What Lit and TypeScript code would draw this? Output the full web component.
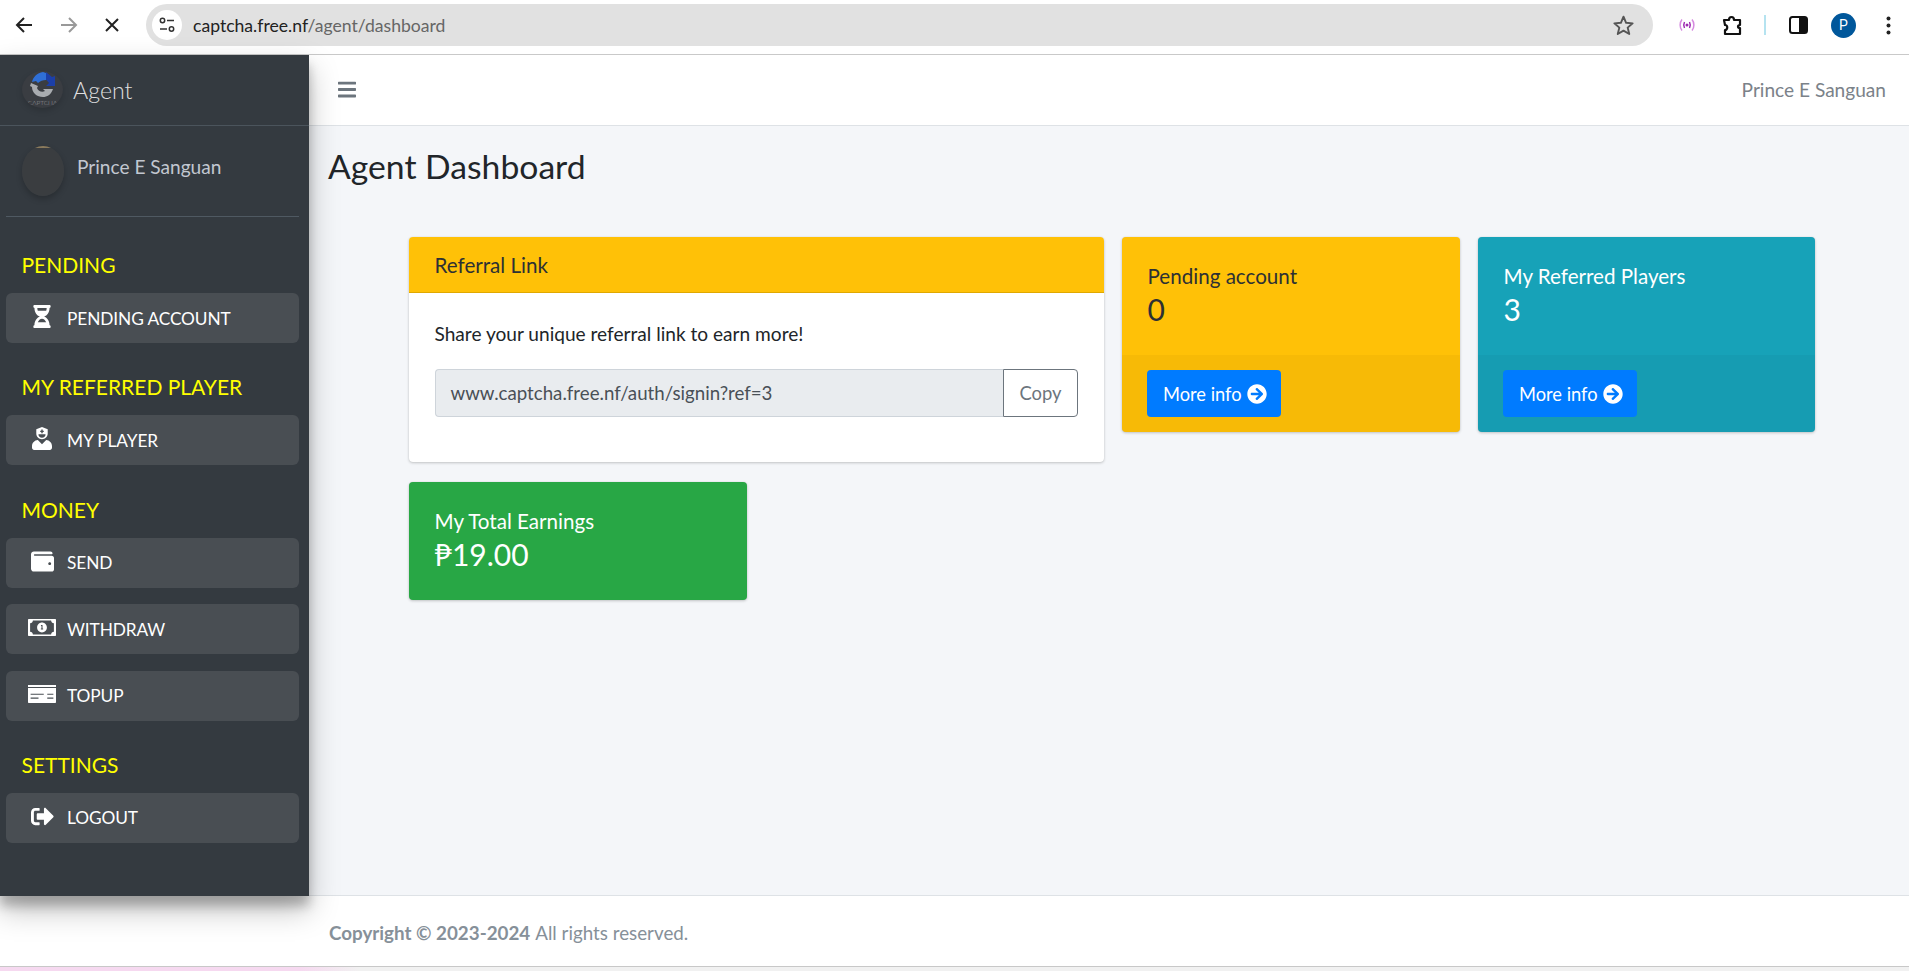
import { css, html, LitElement, svg } from "lit";
import { customElement } from "lit/decorators.js";

const hourglass = svg`<path d="M360 0H24C10.745 0 0 10.745 0 24v16c0 13.255 10.745 24 24 24 0 90.965 51.016 167.734 120.842 192C75.016 280.266 24 357.035 24 448c-13.255 0-24 10.745-24 24v16c0 13.255 10.745 24 24 24h336c13.255 0 24-10.745 24-24v-16c0-13.255-10.745-24-24-24 0-90.965-51.016-167.734-120.842-192C308.984 231.734 360 154.965 360 64c13.255 0 24-10.745 24-24V24c0-13.255-10.745-24-24-24zm-75.078 384H99.08c17.059-46.797 52.096-80 92.92-80 40.821 0 75.862 33.196 92.922 80zm.019-256H99.078C91.988 108.548 88 86.748 88 64h208c0 22.805-3.987 44.587-11.059 64z"/>`;
const nurse = svg`<path d="M224 0 96 48v96c0 70.700 57.300 128 128 128s128-57.300 128-128V48L224 0zm-16 56h32v24h24v32h-24v24h-32v-24h-24V80h24V56zM144 160h160v0c0 44.200-35.800 80-80 80s-80-35.800-80-80zM318 289l-94 94-94-94C58 295 0 354 0 426v38c0 26.500 21.500 48 48 48h352c26.500 0 48-21.500 48-48v-38c0-72-58-131-130-137z" fill-rule="evenodd"/>`;
const wallet = svg`<path d="M461 128H80c-9 0-16-7-16-16s7-16 16-16h384c9 0 16-7 16-16 0-27-21-48-48-48H64C29 32 0 61 0 96v320c0 35 29 64 64 64h397c28 0 51-22 51-48V176c0-26-23-48-51-48zm-45 208c-18 0-32-14-32-32s14-32 32-32 32 14 32 32-14 32-32 32z"/>`;
const bill = svg`<path fill-rule="evenodd" d="M16 64h608c9 0 16 7 16 16v352c0 9-7 16-16 16H16c-9 0-16-7-16-16V80c0-9 7-16 16-16zm32 96v192c35 0 64 29 64 64h416c0-35 29-64 64-64V160c-35 0-64-29-64-64H112c0 35-29 64-64 64zm272-16c62 0 112 50 112 112s-50 112-112 112-112-50-112-112 50-112 112-112zm-24 56v24h12v56h-14v24h52v-24h-14v-80h-36z"/>`;
const card = svg`<path fill-rule="evenodd" d="M0 60h640v44H0zM0 128h640v324c0 9-7 16-16 16H16c-9 0-16-7-16-16V128zm60 130v24h300v-24H60zm380 0v24h140v-24H440zM60 346v24h180v-24H60zm380 0v24h140v-24H440z"/>`;
const signOut = svg`<path d="M497 273L329 441c-15 15-41 4.500-41-17v-96H152c-13.300 0-24-10.700-24-24v-96c0-13.300 10.700-24 24-24h136V88c0-21.400 25.900-32 41-17l168 168c9.300 9.400 9.300 24.600 0 34zM192 436v-40c0-6.600-5.400-12-12-12H96c-17.700 0-32-14.300-32-32V160c0-17.700 14.300-32 32-32h84c6.600 0 12-5.400 12-12V76c0-6.600-5.400-12-12-12H96c-53 0-96 43-96 96v192c0 53 43 96 96 96h84c6.600 0 12-5.400 12-12z"/>`;
const arrowCircle = svg`<path d="M256 8c137 0 248 111 248 248S393 504 256 504 8 393 8 256 119 8 256 8zm-28.900 143.600l75.500 72.400H120c-13.300 0-24 10.700-24 24v16c0 13.300 10.700 24 24 24h182.600l-75.500 72.400c-9.700 9.300-9.900 24.800-.4 34.300l11 10.900c9.400 9.400 24.600 9.400 33.900 0L404.300 273c9.400-9.400 9.400-24.600 0-33.900L271.600 106.300c-9.400-9.400-24.600-9.400-33.900 0l-11 11c-9.400 9.500-9.200 25 .4 34.300z"/>`;
const bars = svg`<path d="M16 132h416c8.837 0 16-7.163 16-16V76c0-8.837-7.163-16-16-16H16C7.163 60 0 67.163 0 76v40c0 8.837 7.163 16 16 16zm0 160h416c8.837 0 16-7.163 16-16v-40c0-8.837-7.163-16-16-16H16c-8.837 0-16 7.163-16 16v40c0 8.837 7.163 16 16 16zm0 160h416c8.837 0 16-7.163 16-16v-40c0-8.837-7.163-16-16-16H16c-8.837 0-16 7.163-16 16v40c0 8.837 7.163 16 16 16z"/>`;

type NavItem = { label: string; icon: unknown; box: string; w: number; h: number };
type NavGroup = { title: string; items: NavItem[] };

const groups: NavGroup[] = [
  { title: "PENDING", items: [{ label: "PENDING ACCOUNT", icon: hourglass, box: "0 0 384 512", w: 18, h: 23 }] },
  { title: "MY REFERRED PLAYER", items: [{ label: "MY PLAYER", icon: nurse, box: "0 0 448 512", w: 20, h: 23 }] },
  {
    title: "MONEY",
    items: [
      { label: "SEND", icon: wallet, box: "0 0 512 512", w: 23, h: 23 },
      { label: "WITHDRAW", icon: bill, box: "0 64 640 384", w: 28, h: 17 },
      { label: "TOPUP", icon: card, box: "0 60 640 408", w: 28, h: 20 },
    ],
  },
  { title: "SETTINGS", items: [{ label: "LOGOUT", icon: signOut, box: "0 0 512 512", w: 23, h: 23 }] },
];

@customElement("app-root")
export class AppRoot extends LitElement {
  static styles = css`
    * {
      box-sizing: border-box;
    }

    :host {
      display: flex;
      flex-direction: column;
      height: 971px;
      overflow: hidden;
      background: #fff;
      color: #212529;
      font-family: "Lato", "Liberation Sans", sans-serif;
      font-size: 18px;
    }

    /* browser chrome */
    .chrome {
      height: 55px;
      flex: none;
      display: flex;
      align-items: center;
      background: #fff;
      border-bottom: 1px solid #c9c9c9;
      padding: 0 0 4px 15px;
    }
    .chrome svg {
      display: block;
      flex: none;
    }
    .nav-btns {
      display: flex;
      gap: 27px;
      align-items: center;
      width: 131px;
    }
    .omnibox {
      width: 1507px;
      height: 42px;
      border-radius: 21px;
      background: #e1e1e1;
      display: flex;
      align-items: center;
      padding: 0 19px 0 6px;
      font-size: 17.6px;
      color: #666;
    }
    .site-icon {
      width: 30px;
      height: 30px;
      border-radius: 50%;
      background: #fff;
      display: flex;
      align-items: center;
      justify-content: center;
      margin-right: 11px;
    }
    .url b {
      font-weight: 400;
      color: #222;
    }
    .star {
      margin-left: auto;
    }
    .tools {
      display: flex;
      align-items: center;
    }
    .profile {
      width: 25px;
      height: 25px;
      border-radius: 50%;
      background: #00579b;
      color: #fff;
      font-size: 14px;
      display: flex;
      align-items: center;
      justify-content: center;
      font-family: "Roboto", sans-serif;
    }
    .sep {
      width: 2px;
      height: 20px;
      background: #b5e3f0;
    }

    /* page */
    .page {
      flex: 1;
      display: flex;
      min-height: 0;
    }
    .sidebar {
      width: 309px;
      height: 841px;
      flex: none;
      background: #343a40;
      box-shadow: 0 14px 28px rgba(0, 0, 0, 0.25), 0 10px 10px rgba(0, 0, 0, 0.22);
      position: relative;
      z-index: 2;
      padding-top: 1px;
    }
    .brand {
      height: 70px;
      display: flex;
      align-items: center;
      padding: 0 0 2px 22px;
      border-bottom: 1px solid #4b545c;
      color: rgba(255, 255, 255, 0.85);
      font-size: 23.2px;
      font-weight: 300;
    }
    .logo {
      width: 41px;
      height: 37px;
      border-radius: 50%;
      margin-right: 10px;
      display: block;
      background: #3a3d42;
      box-shadow: 0 3px 6px rgba(0, 0, 0, 0.16);
    }
    .user {
      height: 91px;
      margin: 0 10px 0 6px;
      padding-left: 16px;
      display: flex;
      align-items: flex-start;
      border-bottom: 1px solid #4f5962;
      color: #c2c7d0;
    }
    .avatar {
      width: 42px;
      height: 50px;
      margin-top: 20px;
      border-radius: 50%;
      background: linear-gradient(#8a7a5c 0 2px, #3a3d40 2px);
      box-shadow: 0 3px 6px rgba(0, 0, 0, 0.23);
    }
    .user-name {
      margin: 27px 0 0 13px;
      font-size: 19.1px;
      line-height: 28px;
    }
    .group-title {
      margin: 0 0 14px 21.5px;
      height: 28px;
      line-height: 28px;
      font-size: 21px;
      color: #ffff00;
    }
    .groups {
      padding-top: 34px;
    }
    .group {
      margin-bottom: 30.3px;
    }
    .items {
      display: flex;
      flex-direction: column;
      gap: 16.5px;
    }
    .item {
      height: 50px;
      margin: 0 10px 0 6px;
      background: #494e53;
      border-radius: 6px;
      color: #fff;
      font-size: 17.3px;
      letter-spacing: -0.1px;
      display: flex;
      align-items: center;
    }
    .item-icon {
      width: 61px;
      padding-left: 11px;
      display: flex;
      justify-content: center;
      align-items: center;
      flex: none;
      margin-top: -3px;
    }
    .item-icon svg {
      display: block;
      fill: #fff;
    }

    .main {
      flex: 1;
      min-width: 0;
      display: flex;
      flex-direction: column;
    }
    .navbar {
      height: 71px;
      flex: none;
      background: #fff;
      border-bottom: 1px solid #dee2e6;
      display: flex;
      align-items: center;
      justify-content: space-between;
      padding: 0 23px 2px 29px;
      color: #7b8289;
      font-size: 19.1px;
    }
    .navbar svg {
      display: block;
      fill: #6c757d;
    }
    .content {
      flex: 1;
      background: #f4f6f9;
      padding: 20px 94px 0 19px;
    }
    h1 {
      margin: 0 0 51px;
      font-size: 33.7px;
      line-height: 40px;
      font-weight: 400;
      color: #212529;
    }
    .grid {
      margin-left: 81px;
      display: grid;
      grid-template-columns: 338px 338px 337.5px 337px;
      column-gap: 18.5px;
      row-gap: 20px;
      align-items: start;
    }
    .card {
      border-radius: 4px;
      box-shadow: 0 0 1px rgba(0, 0, 0, 0.13), 0 1px 3px rgba(0, 0, 0, 0.2);
      overflow: hidden;
    }
    .referral {
      grid-column: span 2;
      height: 225px;
      background: #fff;
    }
    .referral-head {
      height: 56px;
      background: #ffc107;
      border-bottom: 1px solid #e0a800;
      padding: 0 25.5px;
      display: flex;
      align-items: center;
      font-size: 20.6px;
      color: #2d3034;
    }
    .referral-body {
      padding: 27px 25.5px;
      font-size: 19.1px;
    }
    .referral-body p {
      margin: 0 0 21px;
      line-height: 28px;
    }
    .field {
      display: flex;
      height: 48px;
    }
    .field-value {
      flex: 1;
      background: #e9ecef;
      border: 1px solid #ced4da;
      border-right: 0;
      border-radius: 4px 0 0 4px;
      padding-left: 15px;
      display: flex;
      align-items: center;
      color: #495057;
      font-size: 18.7px;
    }
    .copy {
      width: 75px;
      border: 1px solid #6c757d;
      border-radius: 0 4px 4px 0;
      background: #fff;
      display: flex;
      align-items: center;
      justify-content: center;
      color: #6c757d;
      font-size: 18.4px;
    }
    .stat-top {
      height: 118px;
      padding: 25px 25.5px 0;
    }
    .stat-label {
      font-size: 20.6px;
      line-height: 28px;
    }
    .stat-value {
      font-size: 30px;
      line-height: 39px;
    }
    .stat-foot {
      height: 77px;
      padding: 15px 25px;
      background: rgba(0, 0, 0, 0.03);
    }
    .more {
      display: inline-flex;
      align-items: center;
      height: 47px;
      width: 134px;
      padding-left: 16px;
      gap: 5px;
      border-radius: 4px;
      background: #007bff;
      color: #fff;
      font-size: 18.3px;
    }
    .more svg {
      display: block;
      fill: #fff;
    }
    .yellow {
      background: #ffc107;
      color: #2d3034;
    }
    .teal {
      background: #17a2b8;
      color: #fff;
    }
    .green {
      background: #28a745;
      color: #fff;
      height: 118px;
      padding: 25px 25.5px 0;
    }
    .footer {
      height: 71px;
      flex: none;
      background: #fff;
      border-top: 1px solid #dee2e6;
      padding: 2px 0 0 20px;
      display: flex;
      align-items: center;
      gap: 5px;
      color: #869099;
      font-size: 18.8px;
    }
    .bottom-strip {
      height: 5px;
      flex: none;
      border-top: 1px solid #c8c8c8;
      background: linear-gradient(90deg, #f6d9f0 0, #f6d9f0 300px, #f1f1f1 360px);
    }
  `;

  private _renderChrome() {
    return html`
      <div class="chrome">
        <div class="nav-btns">
          <svg width="18" height="18" viewBox="0 0 18 18" fill="none" stroke="#222" stroke-width="2"><path d="M17 9H2M9 2 2 9l7 7" /></svg>
          <svg width="18" height="18" viewBox="0 0 18 18" fill="none" stroke="#999" stroke-width="2"><path d="M1 9h15M9 2l7 7-7 7" /></svg>
          <svg width="14" height="14" viewBox="0 0 14 14" fill="none" stroke="#222" stroke-width="2"><path d="M1 1l12 12M13 1 1 13" /></svg>
        </div>
        <div class="omnibox">
          <span class="site-icon">
            <svg width="16" height="16" viewBox="0 0 16 16" fill="none" stroke="#333" stroke-width="1.5"><circle cx="3.5" cy="3.5" r="2.2" /><path d="M8 3.5h7M1 12h7" /><circle cx="12.5" cy="12" r="2.2" /></svg>
          </span>
          <span class="url"><b>captcha.free.nf</b>/agent/dashboard</span>
          <svg class="star" width="21" height="20" viewBox="0 0 24 23" fill="none" stroke="#555" stroke-width="2.2" stroke-linejoin="round"><path d="M12 2l3 7 7.5.6-5.700 4.900 1.800 7.300L12 18l-6.600 3.800 1.800-7.300L1.500 9.600 9 9z" /></svg>
        </div>
        <div class="tools">
          <svg style="margin-left:25px" width="18" height="14" viewBox="0 0 18 14" fill="none" stroke="#d68ae0" stroke-width="1.5"><path d="M4 1.500C1.500 4.500 1.500 9.500 4 12.500M14 1.500c2.500 3 2.500 8 0 11" /><path d="M6.500 4c-1 2-1 4 0 6M11.500 4c1 2 1 4 0 6" stroke="#9c27b0" /><circle cx="9" cy="7" r="1.5" fill="#9c27b0" stroke="none" /></svg>
          <svg style="margin-left:26px" width="21" height="21" viewBox="0 0 21 21" fill="none" stroke="#111" stroke-width="2.2" stroke-linejoin="round"><path d="M2 5h5c0-4 5-4 5 0h6v5c-1 0-2 .5-2 1.500s1 1.500 2 1.500v6H3v-4c3 0 3-5 0-5z" /></svg>
          <span class="sep" style="margin-left:21px"></span>
          <svg style="margin-left:23px" width="19" height="18" viewBox="0 0 19 18"><rect x="1" y="1" width="17" height="16" rx="2.5" fill="#fff" stroke="#111" stroke-width="2" /><rect x="10" y="1" width="8" height="16" fill="#111" /></svg>
          <span class="profile" style="margin-left:23px">P</span>
          <svg style="margin-left:30px" width="5" height="19" viewBox="0 0 5 19" fill="#222"><circle cx="2.5" cy="2.5" r="2" /><circle cx="2.5" cy="9.5" r="2" /><circle cx="2.5" cy="16.5" r="2" /></svg>
        </div>
      </div>
    `;
  }

  private _renderSidebar() {
    return html`
      <aside class="sidebar">
        <div class="brand">
          <svg class="logo" viewBox="0 0 41 37">
            <path d="M10 11c1-5 5-9 11-10l3 1v7c-3 0-6 1-8 3l-2-2z" fill="#2f6fd6" />
            <path d="M24 1l6 5 3-1v10h-9l3-3c-1-1-2-3-3-3z" fill="#1c3fa8" />
            <path d="M9 12l7 3-1 2c1 3 5 5 8 3l-2-2h10c-2 6-6 8-10 8-6 0-11-4-11-10l-2-1z" fill="#a9acb0" />
            <text x="20.5" y="33.5" text-anchor="middle" font-size="6.5" fill="#9b9ea2" font-family="Lato, sans-serif">CAPTCHA</text>
          </svg>
          Agent
        </div>
        <div class="user">
          <div class="avatar"></div>
          <div class="user-name">Prince E Sanguan</div>
        </div>
        <div class="groups">
          ${groups.map(
            (g) => html`
              <div class="group">
                <div class="group-title">${g.title}</div>
                <div class="items">
                  ${g.items.map(
                    (i) => html`
                      <div class="item">
                        <span class="item-icon"><svg width=${i.w} height=${i.h} viewBox=${i.box}>${i.icon}</svg></span>
                        ${i.label}
                      </div>
                    `
                  )}
                </div>
              </div>
            `
          )}
        </div>
      </aside>
    `;
  }

  private _renderStat(tone: string, label: string, value: string) {
    return html`
      <div class="card ${tone}">
        <div class="stat-top">
          <div class="stat-label">${label}</div>
          <div class="stat-value">${value}</div>
        </div>
        <div class="stat-foot">
          <span class="more">More info <svg width="20" height="20" viewBox="0 0 512 512">${arrowCircle}</svg></span>
        </div>
      </div>
    `;
  }

  protected render() {
    return html`
      ${this._renderChrome()}
      <div class="page">
        ${this._renderSidebar()}
        <div class="main">
          <div class="navbar">
            <svg width="18" height="21" viewBox="0 0 448 512">${bars}</svg>
            <span>Prince E Sanguan</span>
          </div>
          <div class="content">
            <h1>Agent Dashboard</h1>
            <div class="grid">
              <div class="card referral">
                <div class="referral-head">Referral Link</div>
                <div class="referral-body">
                  <p>Share your unique referral link to earn more!</p>
                  <div class="field">
                    <div class="field-value">www.captcha.free.nf/auth/signin?ref=3</div>
                    <div class="copy">Copy</div>
                  </div>
                </div>
              </div>
              ${this._renderStat("yellow", "Pending account", "0")}
              ${this._renderStat("teal", "My Referred Players", "3")}
              <div class="card green">
                <div class="stat-label">My Total Earnings</div>
                <div class="stat-value">₱19.00</div>
              </div>
            </div>
          </div>
          <div class="footer"><b>Copyright © 2023-2024</b> All rights reserved.</div>
        </div>
      </div>
      <div class="bottom-strip"></div>
    `;
  }
}

declare global {
  interface HTMLElementTagNameMap {
    "app-root": AppRoot;
  }
}
